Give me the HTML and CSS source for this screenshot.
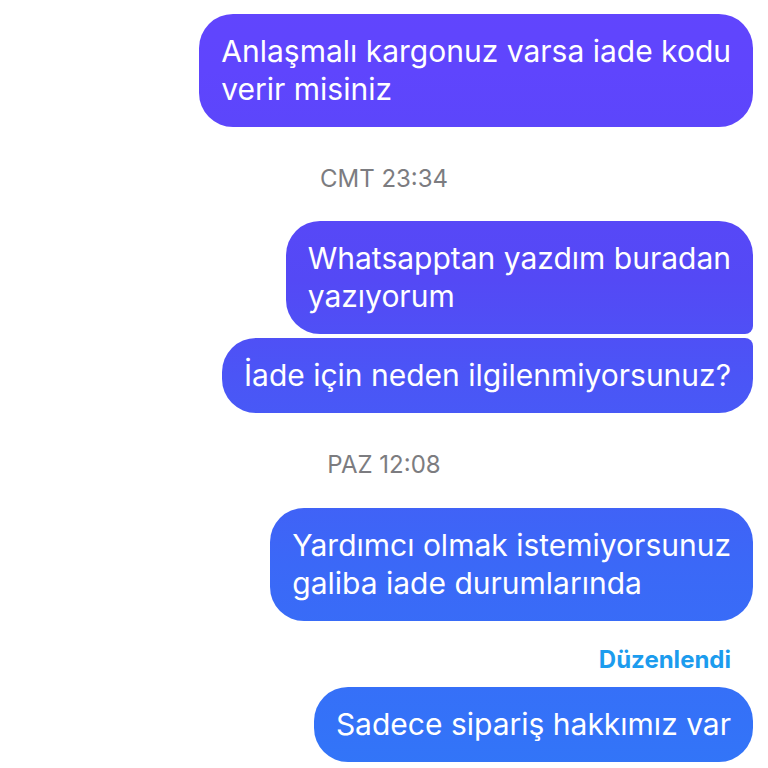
FILE: index.html
```html
<!DOCTYPE html>
<html lang="tr">
<head>
<meta charset="utf-8">
<link rel="stylesheet" href="styles.css">
</head>
<body>
<div class="chat">
  <div class="bubble">Anlaşmalı kargonuz varsa iade kodu<br>verir misiniz</div>
  <div class="stamp stamp-1">CMT 23:34</div>
  <div class="bubble group-top">Whatsapptan yazdım buradan<br>yazıyorum</div>
  <div class="bubble group-bottom">İade için neden ilgilenmiyorsunuz?</div>
  <div class="stamp stamp-2">PAZ 12:08</div>
  <div class="bubble">Yardımcı olmak istemiyorsunuz<br>galiba iade durumlarında</div>
  <div class="edited">Düzenlendi</div>
  <div class="bubble">Sadece sipariş hakkımız var</div>
</div>
</body>
</html>
```
FILE: styles.css
```css
html, body {
  margin: 0;
  padding: 0;
  background: #ffffff;
}
body {
  font-family: "Inter", "Liberation Sans", sans-serif;
  width: 768px;
  height: 768px;
  overflow: hidden;
}
.chat {
  display: flex;
  flex-direction: column;
  align-items: flex-end;
  padding: 14px 15px 0 0;
}
.bubble {
  color: #ffffff;
  font-size: 30px;
  line-height: 38px;
  padding: 18px 22px 19px 22px;
  border-radius: 34px;
  white-space: nowrap;
  background: linear-gradient(180deg, #6145fd 0px, #5f45fd 70px, #5449f5 280px, #4b55f6 376px, #3b68f7 564px, #3472f8 723px, #3275f8 768px);
  background-attachment: fixed;
}
.group-top {
  border-bottom-right-radius: 8px;
}
.group-bottom {
  margin-top: 4px;
  border-top-right-radius: 8px;
}
.stamp {
  align-self: stretch;
  padding-left: 15px;
  text-align: center;
  color: #7c7c80;
  font-size: 24px;
  line-height: 28px;
}
.stamp-1 {
  margin: 38px 0 28px;
}
.stamp-2 {
  margin: 38px 0 29px;
}
.edited {
  margin: 25px 22px 13px 0;
  color: #1c9cee;
  font-size: 24px;
  font-weight: 700;
  line-height: 28px;
}
```
